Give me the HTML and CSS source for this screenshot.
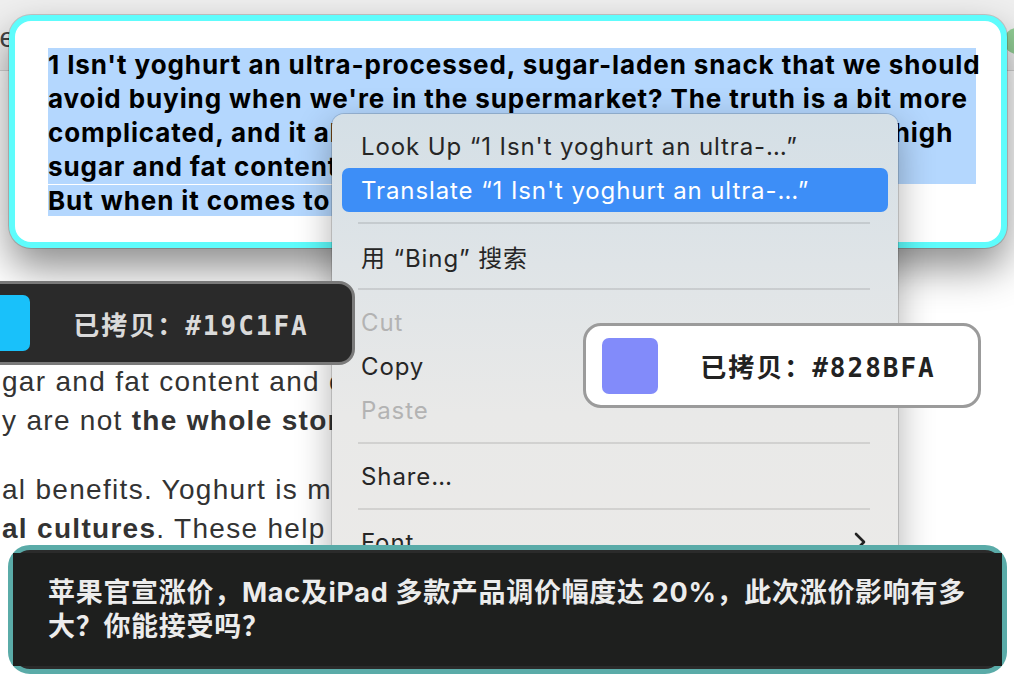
FILE: index.html
```html
<!DOCTYPE html>
<html lang="en">
<head>
  <title>Yoghurt - Clipboard</title>
  <meta charset="UTF-8" />
  <meta name="viewport" content="width=device-width, initial-scale=1.0"/>
  <link rel="stylesheet" href="styles.css">
</head>
<body>
  <div class="page">
    <header class="topbar">
      <span class="topbar-title">Recipe</span>
      <span class="topbar-dot"></span>
    </header>
    <article class="article">
      <p>
        <span class="line">gar and fat content and contain</span>
        <span class="line">y are not <b>the whole story</b>.</span>
      </p>
      <p>
        <span class="line">al benefits. Yoghurt is made</span>
        <span class="line"><b>al cultures</b>. These help</span>
      </p>
    </article>
  </div>

  <!-- clipboard preview card with the selected paragraph -->
  <section class="clip-card">
    <div class="clip-text">
      <div class="sel">1 Isn't yoghurt an ultra-processed, sugar-laden snack that we should</div>
      <div class="sel">avoid buying when we're in the supermarket? The truth is a bit more</div>
      <div class="sel">complicated, and it all depends on how you eat. Some do have high</div>
      <div class="sel">sugar and fat content and additives</div>
      <div><span class="sel">But when it comes to nutrition</span></div>
    </div>
  </section>

  <!-- right-click menu -->
  <nav class="menu">
    <div class="menu-item">Look Up “1 Isn't yoghurt an ultra-…”</div>
    <div class="menu-item active">Translate “1 Isn't yoghurt an ultra-…”</div>
    <div class="menu-sep"></div>
    <div class="menu-item">用 “Bing” 搜索</div>
    <div class="menu-sep"></div>
    <div class="menu-item disabled">Cut</div>
    <div class="menu-item">Copy</div>
    <div class="menu-item disabled">Paste</div>
    <div class="menu-sep"></div>
    <div class="menu-item">Share…</div>
    <div class="menu-sep"></div>
    <div class="menu-item">
      <span>Font</span>
      <svg class="chev" width="12" height="20" viewBox="0 0 12 20">
        <path d="M2 2L10 10L2 18" fill="none" stroke="#222" stroke-width="2.6" stroke-linecap="round" stroke-linejoin="round"/>
      </svg>
    </div>
  </nav>

  <!-- copied-colour toasts -->
  <div class="toast toast-dark">
    <span class="swatch" style="background:#19C1FA"></span>
    <span class="toast-text">已拷贝：#19C1FA</span>
  </div>
  <div class="toast toast-light">
    <span class="swatch" style="background:#828BFA"></span>
    <span class="toast-text">已拷贝：#828BFA</span>
  </div>

  <!-- headline notice -->
  <div class="notice">
    <div class="notice-inner">
      苹果官宣涨价，Mac及iPad 多款产品调价幅度达 20%，此次涨价影响有多<br>大？你能接受吗？
    </div>
  </div>
</body>
</html>
```

FILE: styles.css
```css
* {
  box-sizing: border-box;
}
body {
  margin: 0;
  width: 1014px;
  height: 679px;
  overflow: hidden;
  position: relative;
  background-color: #fff;
  font-family: "Inter", "Noto Sans", "Noto Sans CJK SC", sans-serif;
  color: #222;
}

/* page underneath */
.topbar {
  height: 71px;
  display: flex;
  align-items: flex-start;
  background-color: #efefef;
  border-bottom: 1px solid #d6d6d6;
}
.topbar-title {
  margin-top: 22px;
  margin-left: -72px;
  font-family: "Liberation Sans", sans-serif;
  font-size: 28px;
  color: #444;
}
.topbar-dot {
  margin-left: auto;
  margin-right: -16px;
  margin-top: 28px;
  width: 26px;
  height: 26px;
  border-radius: 50%;
  background-color: #93cf96;
}
.article {
  width: 336px;
  overflow: hidden;
  margin-top: 291px;
  font-family: "Liberation Sans", sans-serif;
  font-size: 28px;
  line-height: 39px;
  color: #333;
}
.article p {
  margin: 0 0 30px 2px;
}
.article .line {
  display: block;
  white-space: nowrap;
  letter-spacing: 1.3px;
}

/* clipboard card */
.clip-card {
  position: absolute;
  left: 9px;
  top: 15px;
  width: 998px;
  height: 233px;
  padding: 27px 25px 0 33px;
  background-color: #fff;
  border: 6px solid #5efcfc;
  border-radius: 22px;
  box-shadow: 0 0 0 1px rgba(0,0,0,0.16), 0 20px 40px rgba(0,0,0,0.45);
}
.clip-text {
  font-size: 26px;
  font-weight: 700;
  line-height: 34px;
  letter-spacing: 0.9px;
  color: #000;
}
.clip-text > div {
  white-space: nowrap;
}
.sel {
  background-color: #b4d7fe;
}

/* context menu */
.menu {
  position: absolute;
  left: 332px;
  top: 114px;
  width: 566px;
  height: 470px;
  padding-top: 10px;
  border-radius: 12px;
  background: linear-gradient(#d4dfe6 0, #dfe4e7 150px, #e9e9e8 300px, #ebeae8 100%);
  box-shadow: 0 0 0 1px rgba(0,0,0,0.14), 0 12px 36px rgba(0,0,0,0.32);
  font-size: 24px;
  letter-spacing: 0.9px;
  color: #262626;
}
.menu-item {
  height: 44px;
  margin: 0 10px;
  padding: 0 22px 0 19px;
  display: flex;
  align-items: center;
  justify-content: space-between;
  border-radius: 7px;
  white-space: nowrap;
}
.menu-item.active {
  background-color: #3d8ef7;
  color: #fff;
}
.menu-item.disabled {
  color: #b3b3b3;
}
.menu-sep {
  height: 2px;
  margin: 10px 28px 10px 26px;
  background-color: rgba(0,0,0,0.1);
}
.chev {
  display: block;
}

/* colour toasts */
.toast {
  position: absolute;
  display: flex;
  align-items: center;
  padding: 0 0 0 16px;
  border-width: 3px;
  border-style: solid;
  font-family: "DejaVu Sans Mono", "Noto Sans CJK SC", monospace;
  font-size: 26px;
  font-weight: 700;
  letter-spacing: 2px;
}
.toast-dark {
  left: -45px;
  top: 281px;
  width: 400px;
  height: 84px;
  border-color: #7a7a7a;
  border-radius: 16px;
  background-color: #2a2a2a;
  color: #dadada;
}
.toast-light {
  left: 583px;
  top: 323px;
  width: 398px;
  height: 85px;
  border-color: #9b9b9b;
  border-radius: 18px;
  background-color: #fff;
  color: #222;
}
.swatch {
  width: 56px;
  height: 56px;
  border-radius: 7px;
  flex: none;
}
.toast-text {
  flex: 1;
  text-align: center;
}

/* headline notice */
.notice {
  position: absolute;
  left: 8px;
  top: 545px;
  width: 999px;
  height: 129px;
  padding: 3px 0;
  border: 5px solid #5aaba8;
  border-radius: 22px;
  background-color: #2b2b2b;
}
.notice-inner {
  height: 100%;
  display: flex;
  align-items: center;
  padding-left: 35px;
  background-color: #1e1f1e;
  font-family: "Inter", "Noto Sans CJK SC", sans-serif;
  font-size: 27px;
  font-weight: 700;
  line-height: 34px;
  letter-spacing: 0.7px;
  color: #ececec;
}
```
